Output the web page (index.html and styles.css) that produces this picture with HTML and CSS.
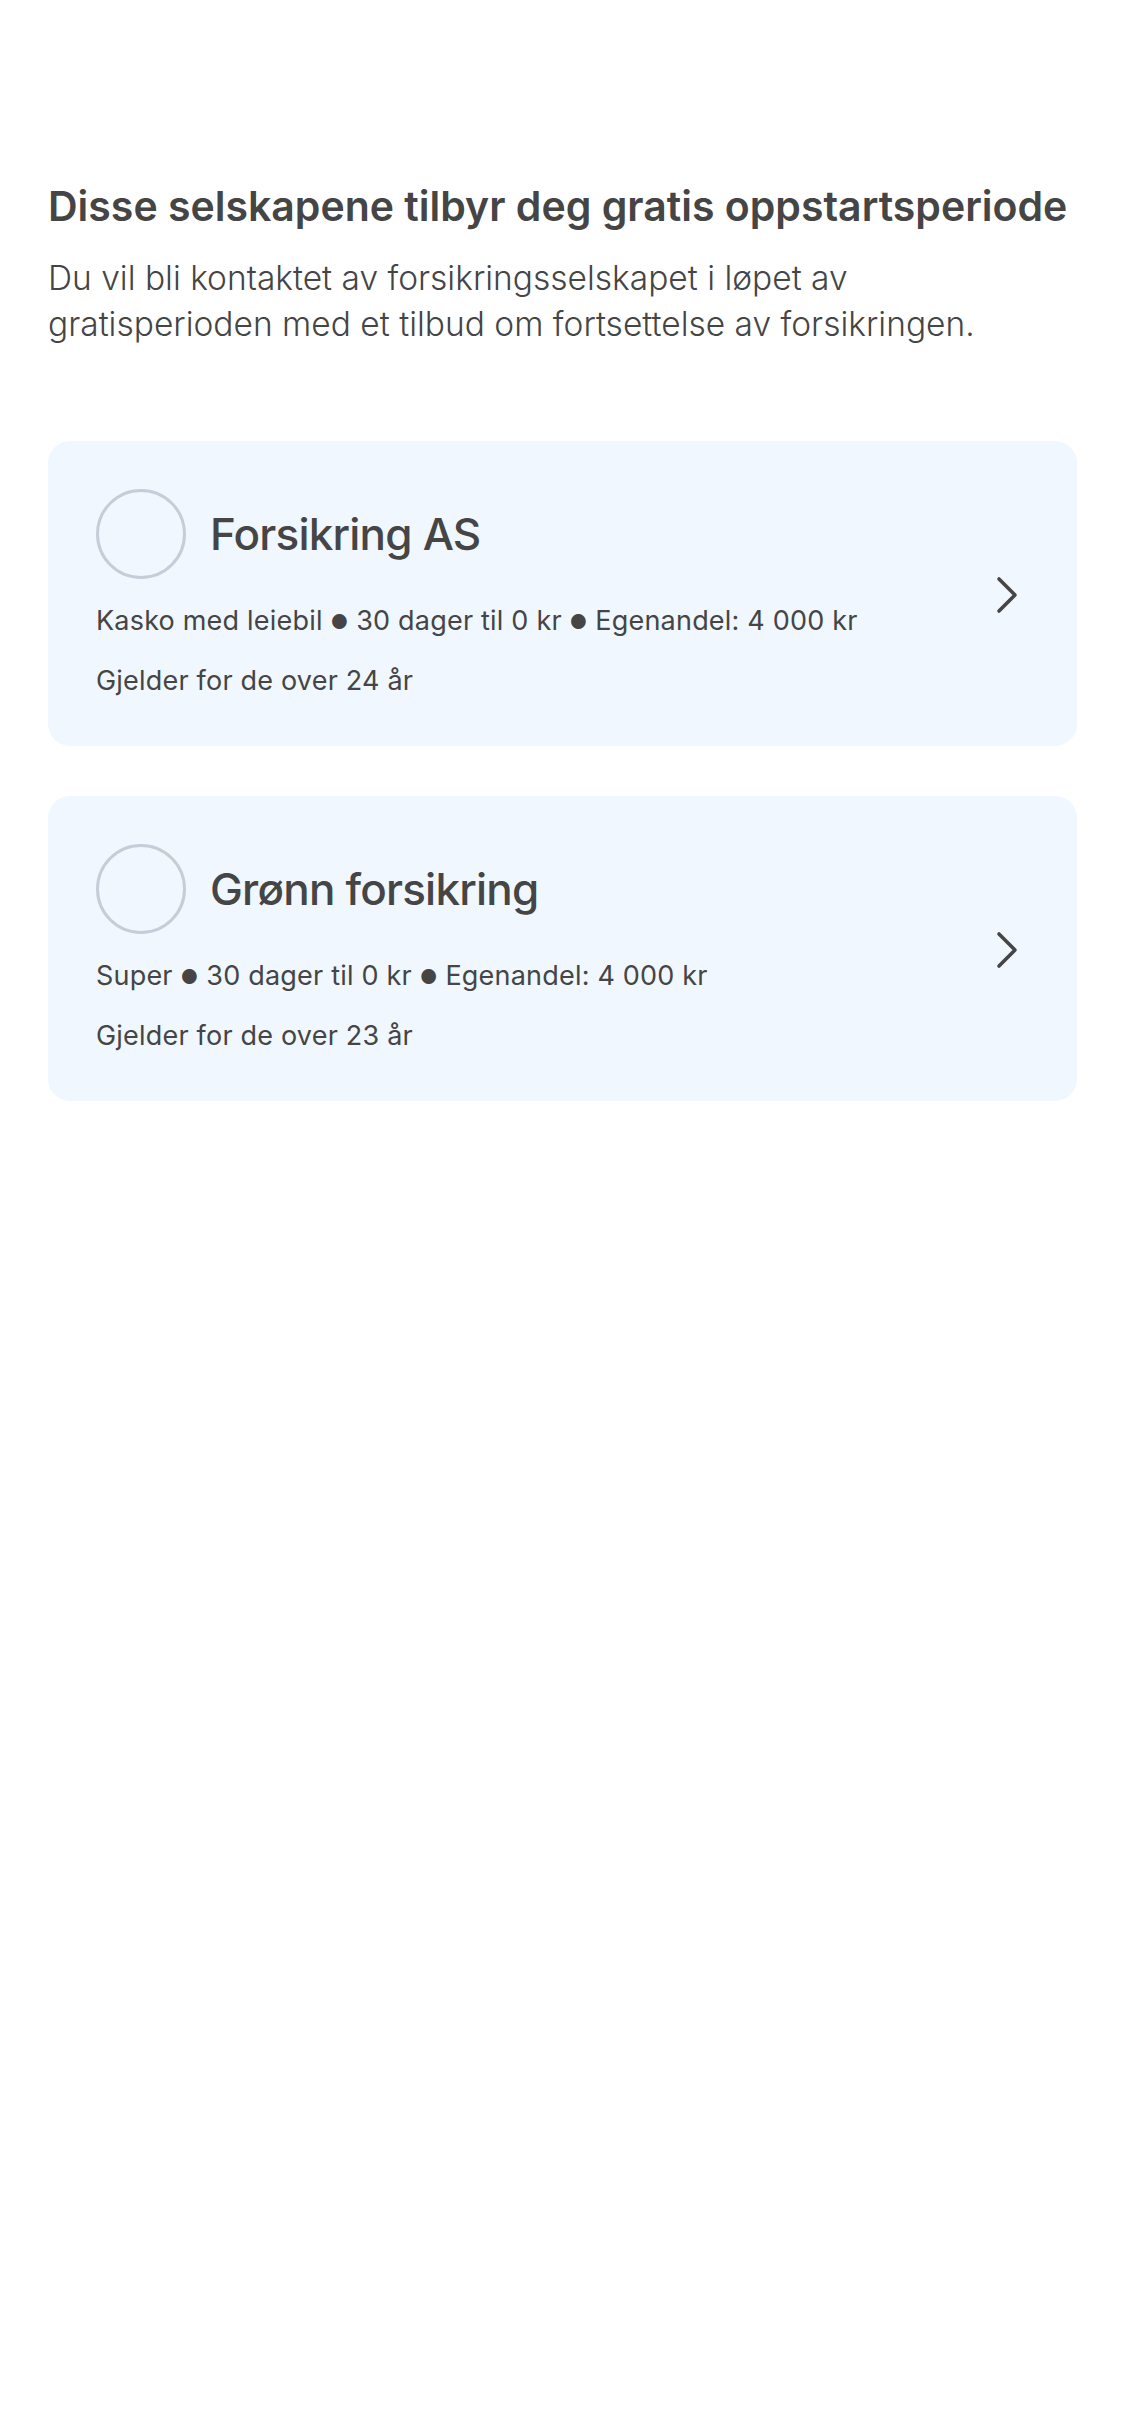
FILE: index.html
```html
<!DOCTYPE html>
<html lang="no">
<head>
<meta charset="utf-8">
<title>Gratis oppstartsperiode</title>
<link rel="stylesheet" href="styles.css">
</head>
<body>
<main class="page">
  <h1 class="heading">Disse selskapene tilbyr deg gratis oppstartsperiode</h1>
  <p class="lead">Du vil bli kontaktet av forsikringsselskapet i løpet av gratisperioden med et tilbud om fortsettelse av forsikringen.</p>

  <div class="cards">
    <a class="card" href="#">
      <div class="card-body">
        <div class="card-head">
          <span class="logo"></span>
          <span class="card-title">Forsikring AS</span>
        </div>
        <p class="card-detail">Kasko med leiebil <span class="dot">●</span> 30 dager til 0 kr <span class="dot">●</span> Egenandel: 4 000 kr</p>
        <p class="card-detail card-detail-last">Gjelder for de over 24 år</p>
      </div>
      <svg class="chevron" viewBox="0 0 24 38" width="24" height="38" aria-hidden="true">
        <polyline points="4,3 20,19 4,35" fill="none" stroke="#454545" stroke-width="3.6" stroke-linecap="round" stroke-linejoin="round"/>
      </svg>
    </a>

    <a class="card" href="#">
      <div class="card-body">
        <div class="card-head">
          <span class="logo"></span>
          <span class="card-title">Grønn forsikring</span>
        </div>
        <p class="card-detail">Super <span class="dot">●</span> 30 dager til 0 kr <span class="dot">●</span> Egenandel: 4 000 kr</p>
        <p class="card-detail card-detail-last">Gjelder for de over 23 år</p>
      </div>
      <svg class="chevron" viewBox="0 0 24 38" width="24" height="38" aria-hidden="true">
        <polyline points="4,3 20,19 4,35" fill="none" stroke="#454545" stroke-width="3.6" stroke-linecap="round" stroke-linejoin="round"/>
      </svg>
    </a>
  </div>
</main>
</body>
</html>
```

FILE: styles.css
```css
html, body {
  margin: 0;
  padding: 0;
  background: #ffffff;
}

body {
  font-family: "Inter", "Lato", "Liberation Sans", sans-serif;
  font-variant-ligatures: none;
  color: #454545;
}

.page {
  padding: 180px 48px 0 48px;
}

.heading {
  margin: 0;
  font-size: 41px;
  line-height: 52px;
  font-weight: 600;
  letter-spacing: 0;
  color: #454545;
}

.lead {
  margin: 23px 0 0 0;
  font-size: 33.5px;
  line-height: 46px;
  font-weight: 300;
  letter-spacing: 0;
  color: #454545;
}

.cards {
  margin-top: 94px;
  display: flex;
  flex-direction: column;
  gap: 50px;
}

.card {
  display: flex;
  align-items: center;
  background: #f0f7fe;
  border-radius: 22px;
  padding: 48px 58px 45px 48px;
  text-decoration: none;
  color: inherit;
}

.card-body {
  flex: 1;
  min-width: 0;
}

.card-head {
  display: flex;
  align-items: center;
  gap: 24px;
}

.logo {
  width: 84px;
  height: 84px;
  border: 3px solid #c6cdd9;
  border-radius: 50%;
  flex: none;
}

.card-title {
  font-size: 44px;
  line-height: 56px;
  font-weight: 500;
  letter-spacing: -0.8px;
  color: #454545;
}

.card-detail {
  margin: 22px 0 0 0;
  font-size: 27px;
  line-height: 40px;
  font-weight: 400;
  letter-spacing: 0.2px;
  color: #454545;
}

.dot {
  font-size: 0.72em;
  vertical-align: 1px;
}

.card-detail-last {
  margin-top: 19px;
}

.chevron {
  flex: none;
  display: block;
}
```
